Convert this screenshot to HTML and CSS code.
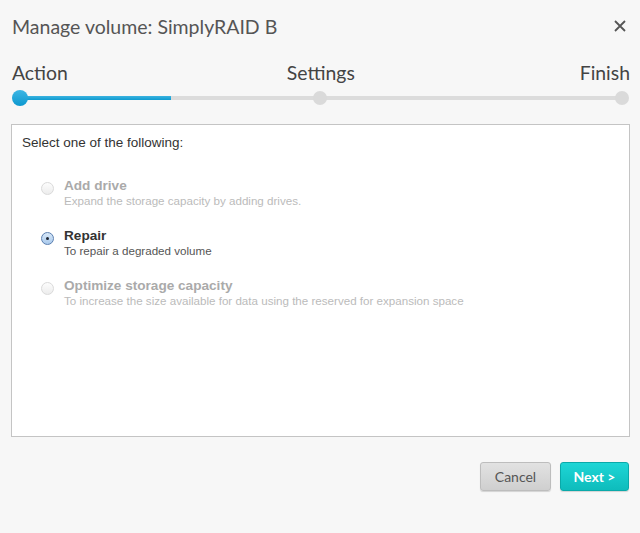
FILE: index.html
```html
<!DOCTYPE html>
<html lang="en">
<head>
    <meta charset="UTF-8">
    <title>Manage volume</title>
    <link rel="stylesheet" href="styles.css">
</head>
<body>
    <div class="dialog">
        <div class="header">
            <h1>Manage volume: SimplyRAID B</h1>
            <svg class="close" width="12" height="12" viewBox="0 0 12 12">
                <path d="M1 1L11 11M11 1L1 11" stroke="#555" stroke-width="1.8" fill="none"/>
            </svg>
        </div>
        <div class="steps">
            <div class="labels">
                <span>Action</span>
                <span class="mid">Settings</span>
                <span>Finish</span>
            </div>
            <div class="track">
                <div class="fill"></div>
                <span class="dot dot-first active"></span>
                <span class="dot dot-mid"></span>
                <span class="dot dot-last"></span>
            </div>
        </div>
        <div class="panel">
            <p class="lead">Select one of the following:</p>
            <div class="options">
                <label class="option disabled">
                    <span class="radio"></span>
                    <span class="text">
                        <strong>Add drive</strong>
                        <small>Expand the storage capacity by adding drives.</small>
                    </span>
                </label>
                <label class="option">
                    <span class="radio checked"></span>
                    <span class="text">
                        <strong>Repair</strong>
                        <small>To repair a degraded volume</small>
                    </span>
                </label>
                <label class="option disabled">
                    <span class="radio"></span>
                    <span class="text">
                        <strong>Optimize storage capacity</strong>
                        <small>To increase the size available for data using the reserved for expansion space</small>
                    </span>
                </label>
            </div>
        </div>
        <div class="footer">
            <button class="btn btn-cancel">Cancel</button>
            <button class="btn btn-next">Next &gt;</button>
        </div>
    </div>
</body>
</html>
```
FILE: styles.css
```css
html, body {
    margin: 0;
    height: 100%;
    background: #f7f7f7;
}
.dialog {
    font-family: Lato, "Liberation Sans", sans-serif;
    color: #555;
    padding: 0 10px 0 11px;
}
.header {
    display: flex;
    justify-content: space-between;
    align-items: center;
    height: 52px;
}
.header h1 {
    margin: 0 0 0 1px;
    font-size: 19.5px;
    font-weight: 400;
    color: #555;
}
.close {
    margin-right: 4px;
    margin-top: -1px;
}
.steps {
    padding-top: 9px;
}
.labels {
    display: flex;
    justify-content: space-between;
    font-size: 19.4px;
    line-height: 24px;
    color: #444;
    padding-left: 1px;
}
.labels .mid {
    margin-right: 6px;
}
.track {
    position: relative;
    height: 4px;
    margin: 11px 8px 0 9px;
    background: #dcdcdc;
}
.fill {
    width: 151px;
    height: 100%;
    background: linear-gradient(#3bb3e0, #0e9bd0);
}
.dot {
    position: absolute;
    top: -5px;
    width: 14px;
    height: 14px;
    border-radius: 50%;
    background: #dadada;
}
.dot-first {
    left: -7px;
}
.dot-mid {
    left: 293px;
}
.dot-last {
    right: -7px;
}
.dot.active {
    top: -6px;
    left: -8px;
    width: 16px;
    height: 16px;
    background: linear-gradient(#3db6e4, #0d98cf);
}
.panel {
    margin-top: 24px;
    height: 311px;
    background: #fff;
    border: 1px solid #c4c4c4;
    font-family: "Liberation Sans", Arial, sans-serif;
}
.lead {
    margin: 10px 0 0 10px;
    font-size: 13.5px;
    color: #333;
}
.options {
    display: flex;
    flex-direction: column;
    gap: 20px;
    padding: 28px 0 0 29px;
}
.option {
    display: flex;
    align-items: flex-start;
    gap: 10px;
}
.radio {
    width: 13px;
    height: 13px;
    margin-top: 4px;
    border-radius: 50%;
    border: 1px solid #c6c6c6;
    background: linear-gradient(#fdfdfd, #ececec);
    box-sizing: border-box;
    position: relative;
    flex-shrink: 0;
}
.radio.checked {
    border-color: #5b7fb0;
    background: linear-gradient(#d8e8f8, #a9c9ec);
}
.radio.checked::after {
    content: "";
    position: absolute;
    left: 4px;
    top: 4px;
    width: 3px;
    height: 3px;
    border-radius: 50%;
    background: #1b2433;
}
.text {
    display: flex;
    flex-direction: column;
}
.text strong {
    font-size: 13.6px;
    line-height: 16px;
    color: #333;
}
.text small {
    font-size: 11.6px;
    line-height: 14px;
    color: #555;
}
.option.disabled strong {
    color: #aaa;
}
.option.disabled small {
    color: #bbb;
}
.option.disabled .radio {
    border-color: #dadada;
}
.footer {
    display: flex;
    justify-content: flex-end;
    gap: 9px;
    padding: 25px 1px 0 0;
}
.btn {
    font-family: Lato, "Liberation Sans", sans-serif;
    font-size: 14px;
    height: 29px;
    border-radius: 3px;
    cursor: pointer;
}
.btn-cancel {
    width: 71px;
    color: #555;
    background: linear-gradient(#e2e2e2, #cfcfcf);
    border: 1px solid #bdbdbd;
    box-shadow: 0 1px 1px rgba(0,0,0,0.15);
}
.btn-next {
    width: 69px;
    color: #fff;
    font-weight: 700;
    background: linear-gradient(#1ed6d6, #0ebcbc);
    border: 1px solid #0aa9a9;
    box-shadow: 0 1px 1px rgba(0,0,0,0.15);
}
```
